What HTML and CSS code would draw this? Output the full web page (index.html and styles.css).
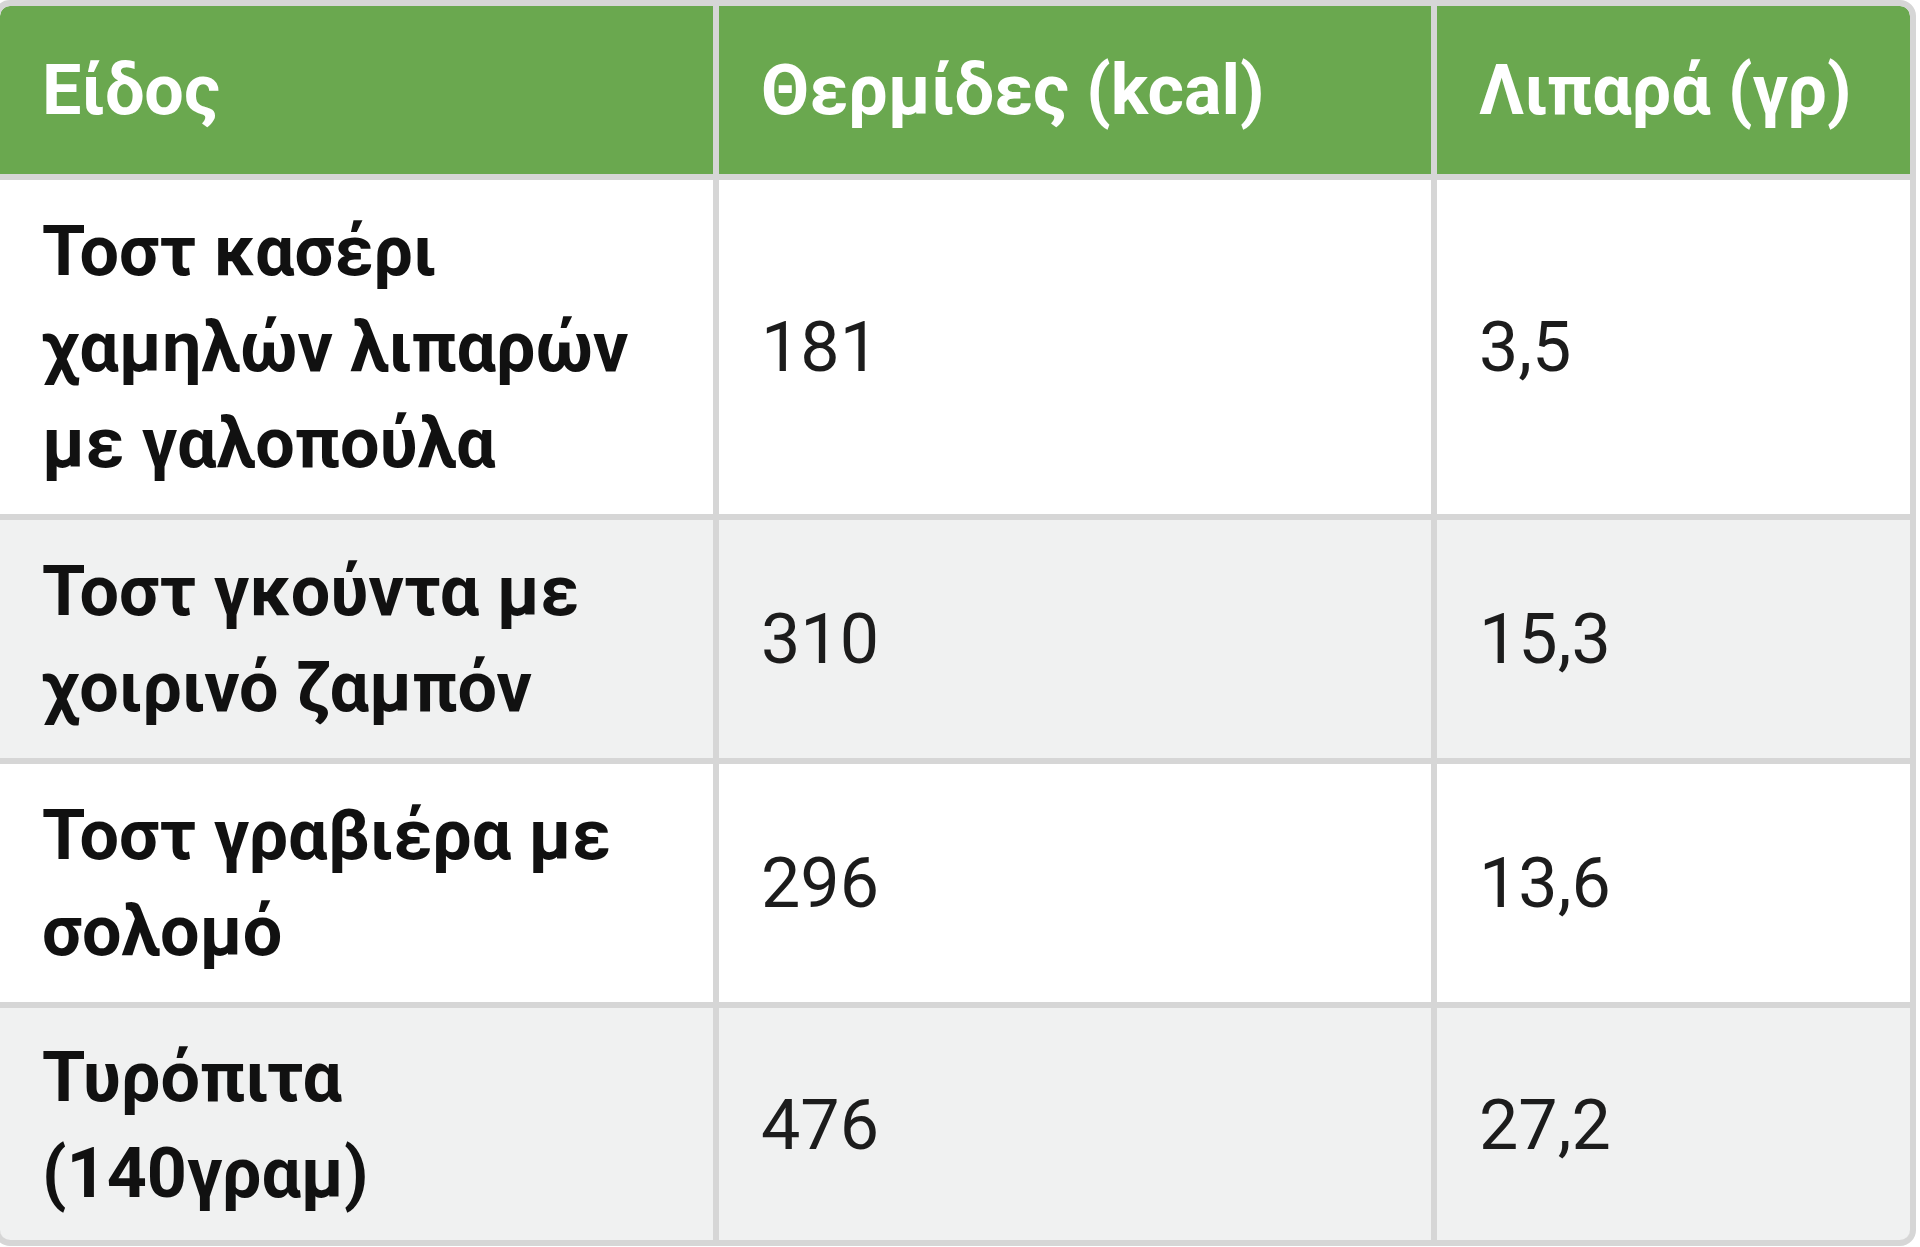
FILE: index.html
```html
<!DOCTYPE html>
<html lang="el">
<head>
<meta charset="utf-8">
<title>Θερμίδες</title>
<link rel="stylesheet" href="styles.css">
</head>
<body>
<div class="table-wrap">
  <div class="grid">
    <div class="cell head first">Είδος</div>
    <div class="cell head">Θερμίδες (kcal)</div>
    <div class="cell head last">Λιπαρά (γρ)</div>

    <div class="cell name">Τοστ κασέρι χαμηλών λιπαρών με γαλοπούλα</div>
    <div class="cell num">181</div>
    <div class="cell num">3,5</div>

    <div class="cell name alt">Τοστ γκούντα με χοιρινό ζαμπόν</div>
    <div class="cell num alt">310</div>
    <div class="cell num alt">15,3</div>

    <div class="cell name">Τοστ γραβιέρα με σολομό</div>
    <div class="cell num">296</div>
    <div class="cell num">13,6</div>

    <div class="cell name alt bl lastrow">Τυρόπιτα (140γραμ)</div>
    <div class="cell num alt lastrow">476</div>
    <div class="cell num alt br lastrow">27,2</div>
  </div>
</div>
</body>
</html>
```
FILE: styles.css
```css
html, body {
  margin: 0;
  padding: 0;
  background: #ffffff;
}
body {
  font-family: Roboto, "Noto Sans", "DejaVu Sans", sans-serif;
  color: #1c1c1c;
}
.table-wrap {
  width: 1910px;
  margin-left: -6px;
  border: 6px solid #d6d6d6;
  border-radius: 16px;
  overflow: hidden;
  background: #d6d6d6;
}
.grid {
  display: grid;
  grid-template-columns: 713px 712px 473px;
  gap: 6px;
  background: #d6d6d6;
}
.cell {
  font-size: 70px;
  line-height: 96px;
  padding: 23px 40px 23px 42px;
  background: #ffffff;
  display: flex;
  align-items: center;
}
.cell.alt {
  background: #f0f1f1;
}
.cell.lastrow {
  padding-top: 21px;
  padding-bottom: 19px;
}
.head {
  background: #6aa84f;
  color: #ffffff;
  font-weight: 700;
  padding-top: 36px;
  padding-bottom: 36px;
}
.head.first { border-top-left-radius: 10px; }
.head.last { border-top-right-radius: 10px; }
.name {
  font-weight: 700;
  color: #111111;
}
.num {
  font-weight: 400;
}
.bl { border-bottom-left-radius: 10px; }
.br { border-bottom-right-radius: 10px; }
```
